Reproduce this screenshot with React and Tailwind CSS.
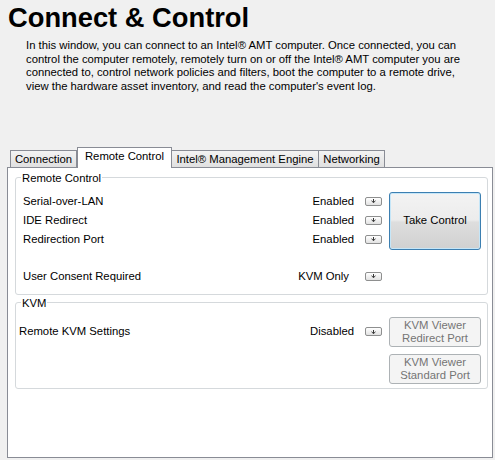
import React from 'react'

// Small "more" button shown to the right of each setting value.
function MiniButton({ className = '' }) {
  return (
    <div
      className={`w-[17px] h-[9px] shrink-0 rounded-[2px] border border-[#8e8f8f] bg-[linear-gradient(to_bottom,#ffffff,#e2e2e2)] flex items-center justify-center ${className}`}
    >
      <svg width="5" height="4" viewBox="0 0 5 4" className="block">
        <path d="M2.5 0 V3.5 M0.5 1.8 L2.5 3.6 L4.5 1.8" stroke="#222" strokeWidth="0.9" fill="none" />
      </svg>
    </div>
  )
}

function SettingRow({ label, value, valueClass = '', children }) {
  return (
    <div className="h-[19px] flex items-center">
      <span className="flex-1 whitespace-nowrap">{label}</span>
      <span className={`whitespace-nowrap ${valueClass}`}>{value}</span>
      <MiniButton className="ml-[11px] mr-[7px]" />
      {children}
    </div>
  )
}

function GroupBox({ title, className = '', children }) {
  return (
    <fieldset className={`border border-[#d5d9dc] rounded-[3px] ${className}`}>
      <legend className="ml-[5px] px-px leading-[14px]">{title}</legend>
      {children}
    </fieldset>
  )
}

function KvmButton({ children }) {
  return (
    <div className="w-[92px] h-[30px] rounded-[3px] border border-[#adb2b5] bg-[#f4f4f4] text-[#747474] leading-[13px] flex items-center justify-center text-center">
      {children}
    </div>
  )
}

const tabBase = 'border border-b-0 border-[#898c95] pt-px leading-[14px] text-center whitespace-nowrap'
const tabIdle = `${tabBase} h-[17px] bg-[linear-gradient(to_bottom,#f3f3f3,#e0e0e0)]`

export default function App() {
  return (
    <div className="w-[495px] h-[460px] overflow-hidden bg-[#f0f0f0] text-black text-[11.3px] font-['Liberation_Sans',Arial,sans-serif]">
      <h1 className="pl-[8px] pt-[3px] text-[27.3px] font-bold leading-[30px]">Connect &amp; Control</h1>

      <p className="ml-[26px] mt-[6px] leading-[13.7px] whitespace-nowrap">
        In this window, you can connect to an Intel® AMT computer. Once connected, you can<br />
        control the computer remotely, remotely turn on or off the Intel® AMT computer you are<br />
        connected to, control network policies and filters, boot the computer to a remote drive,<br />
        view the hardware asset inventory, and read the computer's event log.
      </p>

      {/* tab strip */}
      <div className="mt-[53px] h-[20px] pl-[10px] flex items-end">
        <div className={`${tabIdle} w-[67px]`}>Connection</div>
        <div className={`${tabBase} w-[95px] h-[21px] -mb-px bg-white relative z-10`}>Remote Control</div>
        <div className={`${tabIdle} w-[148px] -ml-px`}>Intel® Management Engine</div>
        <div className={`${tabIdle} w-[67px] -ml-px`}>Networking</div>
      </div>

      {/* tab page */}
      <div className="ml-[7px] w-[486px] h-[291px] border border-[#898c95] bg-white pt-[3px] pl-[7px]">
        <GroupBox title="Remote Control" className="w-[473px]">
          <div className="pl-[7px] pr-[6px] pb-[8px]">
            <div className="mt-[7px] flex items-start">
              <div className="flex-1 flex flex-col">
                <SettingRow label="Serial-over-LAN" value="Enabled" />
                <SettingRow label="IDE Redirect" value="Enabled" />
                <SettingRow label="Redirection Port" value="Enabled" />
              </div>
              <div className="w-[92px] h-[58px] rounded-[3px] border border-[#3c7fb1] shadow-[inset_0_0_0_1px_#c5e6f8] bg-[linear-gradient(to_bottom,#f3f3f3_0%,#ececec_48%,#dedede_52%,#d0d0d0_100%)] flex items-center justify-center">
                Take Control
              </div>
            </div>
            <div className="mt-[17px]">
              <SettingRow label="User Consent Required" value="KVM Only" valueClass="mr-[5px]">
                <div className="w-[92px] shrink-0" />
              </SettingRow>
            </div>
          </div>
        </GroupBox>

        <GroupBox title="KVM" className="w-[473px] mt-px">
          <div className="pl-[3px] pr-[6px] pb-[4px]">
            <div className="mt-[7px] flex items-start">
              <div className="flex-1 h-[30px] flex items-center">
                <span className="flex-1 whitespace-nowrap">Remote KVM Settings</span>
                <span>Disabled</span>
                <MiniButton className="ml-[11px] mr-[7px]" />
              </div>
              <div className="flex flex-col gap-[7px]">
                <KvmButton>KVM Viewer<br />Redirect Port</KvmButton>
                <KvmButton>KVM Viewer<br />Standard Port</KvmButton>
              </div>
            </div>
          </div>
        </GroupBox>
      </div>
    </div>
  )
}
